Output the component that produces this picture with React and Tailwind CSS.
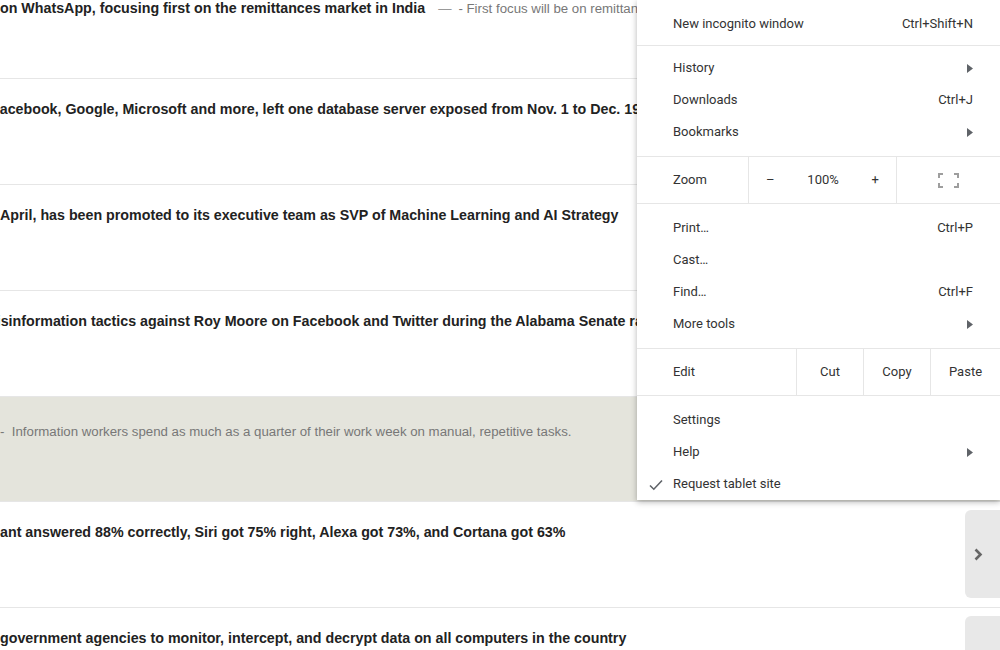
import { Fragment } from "react";

const stories = [
  {
    title: "on WhatsApp, focusing first on the remittances market in India",
    summary: "- First focus will be on remittances, the company says, with payments to follow later this year",
    shift: "ml-0",
    height: "h-[101px]",
  },
  {
    title:
      "Facebook, Google, Microsoft and more, left one database server exposed from Nov. 1 to Dec. 19, leaking user records",
    shift: "-ml-[9px]",
  },
  {
    title: "April, has been promoted to its executive team as SVP of Machine Learning and AI Strategy",
    shift: "ml-0",
  },
  {
    title:
      "disinformation tactics against Roy Moore on Facebook and Twitter during the Alabama Senate race",
    shift: "-ml-[12px]",
  },
  {
    summary: "-\u00a0 Information workers spend as much as a quarter of their work week on manual, repetitive tasks.",
    highlight: true,
    height: "h-[105px]",
  },
  {
    title: "ant answered 88% correctly, Siri got 75% right, Alexa got 73%, and Cortana got 63%",
    shift: "ml-0",
    next: true,
  },
  {
    title: "government agencies to monitor, intercept, and decrypt data on all computers in the country",
    shift: "ml-0",
    next: true,
  },
];

function Arrow() {
  return (
    <svg width="6" height="9" viewBox="0 0 6 9" className="fill-[#5f6368]">
      <path d="M0 0 L6 4.5 L0 9 Z" />
    </svg>
  );
}

function Item({ label, shortcut, arrow, checked }) {
  return (
    <div className="h-8 flex items-center pl-9 pr-[27px] relative">
      {checked && (
        <svg
          width="14"
          height="12"
          viewBox="0 0 14 12"
          className="absolute left-[12px] top-[11px]"
          fill="none"
          stroke="#5f6368"
          strokeWidth="1.6"
        >
          <path d="M1 6.5 L4.8 10.2 L13 1.5" />
        </svg>
      )}
      <span className="flex-1">{label}</span>
      {shortcut && <span>{shortcut}</span>}
      {arrow && <Arrow />}
    </div>
  );
}

function Menu() {
  return (
    <div className="absolute top-0 right-0 w-[363px] h-[500px] bg-white shadow-[0_2px_6px_rgba(0,0,0,0.3)] text-[13px] text-[#333] font-['Roboto',sans-serif]">
      <div className="pt-[8px] pb-[5px] border-b border-[#e6e6e6]">
        <Item label="New incognito window" shortcut="Ctrl+Shift+N" />
      </div>
      <div className="pt-[6px] pb-[8px] border-b border-[#e6e6e6]">
        <Item label="History" arrow />
        <Item label="Downloads" shortcut="Ctrl+J" />
        <Item label="Bookmarks" arrow />
      </div>
      <div className="h-[47px] flex border-b border-[#e6e6e6]">
        <div className="w-[112px] pl-9 flex items-center border-r border-[#e6e6e6]">Zoom</div>
        <div className="w-[148px] flex items-center justify-between px-[17px] border-r border-[#e6e6e6]">
          <span>–</span>
          <span>100%</span>
          <span>+</span>
        </div>
        <div className="flex-1 flex items-center justify-center">
          <svg width="21" height="15" viewBox="0 0 21 15" fill="none" stroke="#9e9e9e" strokeWidth="2">
            <path d="M1 5 V1 H5 M16 1 H20 V5 M20 10 V14 H16 M5 14 H1 V10" />
          </svg>
        </div>
      </div>
      <div className="pt-[8px] pb-[8px] border-b border-[#e6e6e6]">
        <Item label="Print…" shortcut="Ctrl+P" />
        <Item label="Cast…" />
        <Item label="Find…" shortcut="Ctrl+F" />
        <Item label="More tools" arrow />
      </div>
      <div className="h-[47px] flex border-b border-[#e6e6e6]">
        <div className="w-[160px] pl-9 flex items-center border-r border-[#e6e6e6]">Edit</div>
        <div className="w-[67px] flex items-center justify-center border-r border-[#e6e6e6]">Cut</div>
        <div className="w-[67px] flex items-center justify-center border-r border-[#e6e6e6]">Copy</div>
        <div className="flex-1 flex items-center justify-center">Paste</div>
      </div>
      <div className="pt-[8px]">
        <Item label="Settings" />
        <Item label="Help" arrow />
        <Item label="Request tablet site" checked />
      </div>
    </div>
  );
}

export default function App() {
  return (
    <div className="relative w-[1000px] h-[650px] overflow-hidden bg-white font-['Liberation_Sans',Arial,sans-serif]">
      <div className="-mt-[22px]">
        {stories.map((s, i) => (
          <div
            key={i}
            className={`flex border-b border-[#e6e6e6] overflow-hidden ${s.height ?? "h-[106px]"} ${
              s.highlight ? "bg-[#e4e4dc]" : "bg-white"
            }`}
          >
            <div className={`flex-1 min-w-0 whitespace-nowrap ${s.highlight ? "pt-[25px]" : "pt-[20px]"}`}>
              {s.title ? (
                <div className={`flex items-baseline ${s.shift}`}>
                  <span className="text-[14.25px] font-bold text-[#222]">{s.title}</span>
                  {s.summary && (
                    <Fragment>
                      <span className="ml-[13px] text-[13.25px] text-[#999]">—</span>
                      <span className="ml-[7px] text-[13.25px] text-[#777]">{s.summary}</span>
                    </Fragment>
                  )}
                </div>
              ) : (
                <div className="text-[13.25px] text-[#777]">{s.summary}</div>
              )}
            </div>
            {s.next && (
              <div className="shrink-0 w-[35px] mt-[8px] mb-[9px] ml-4 rounded-l-md bg-[#e8e8e8] flex items-center pl-[9px]">
                <svg width="9" height="13" viewBox="0 0 9 13" fill="none" stroke="#666" strokeWidth="2.6">
                  <path d="M1.5 1.5 L6.5 6.5 L1.5 11.5" />
                </svg>
              </div>
            )}
          </div>
        ))}
      </div>
      <Menu />
    </div>
  );
}
